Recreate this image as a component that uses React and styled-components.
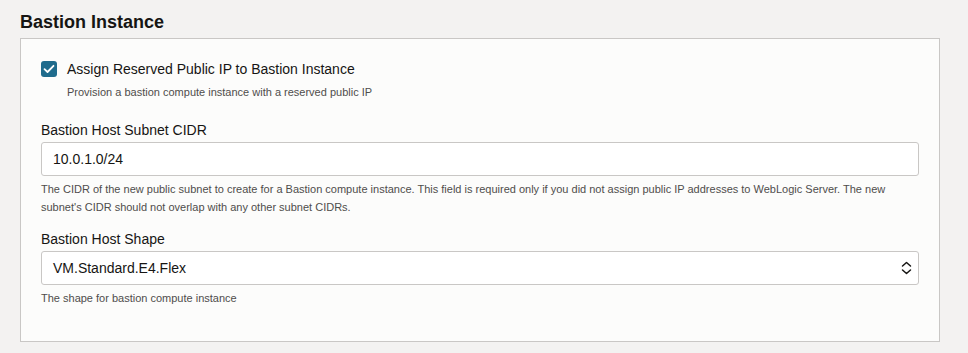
import styled, { createGlobalStyle } from "styled-components";

const GlobalStyle = createGlobalStyle`
	html, body {
		margin: 0;
		padding: 0;
		background: #f3f2f1;
		font-family: "Liberation Sans", Arial, sans-serif;
		color: #161513;
	}
`;

const Page = styled.div`
	padding: 12px 28px 12px 20px;
	width: 968px;
	height: 353px;
	box-sizing: border-box;
`;

const Heading = styled.h2`
	margin: 0 0 5px;
	font-size: 18px;
	font-weight: 700;
	line-height: 21px;
`;

const Panel = styled.div`
	background: #fcfcfb;
	border: 1px solid #c9c7c5;
	padding: 21px 20px 34px 20px;
	display: flex;
	flex-direction: column;
`;

const CheckRow = styled.label`
	display: flex;
	align-items: center;
	gap: 10px;
	font-size: 14px;
	line-height: 18px;
`;

const Box = styled.span`
	width: 16px;
	height: 16px;
	border-radius: 3px;
	background: #1f6b8c;
	display: flex;
	align-items: center;
	justify-content: center;
`;

const Help = styled.p`
	margin: ${(props) => props.$margin || "0"};
	font-size: 11px;
	line-height: 18px;
	color: #4f4d4b;
`;

const Field = styled.div`
	display: flex;
	flex-direction: column;
	margin-top: ${(props) => props.$top}px;
`;

const Label = styled.div`
	font-size: 14px;
	line-height: 18px;
	margin-bottom: 3px;
`;

const Input = styled.div`
	height: 34px;
	box-sizing: border-box;
	border: 1px solid #c9c7c5;
	border-radius: 3px;
	background: #fff;
	display: flex;
	align-items: center;
	justify-content: space-between;
	padding: 0 6px 0 11px;
	font-size: 14px;
`;

const Check = () => (
	<Box>
		<svg width="12" height="10" viewBox="0 0 12 10" fill="none">
			<path d="M1.5 5.2 L4.5 8 L10.5 1.8" stroke="#fff" strokeWidth="1.8" strokeLinecap="round" strokeLinejoin="round" />
		</svg>
	</Box>
);

const Chevrons = () => (
	<svg width="11" height="14" viewBox="0 0 11 14" fill="none">
		<path d="M1.5 5 L5.5 1.5 L9.5 5" stroke="#161513" strokeWidth="1.5" strokeLinecap="round" strokeLinejoin="round" />
		<path d="M1.5 9 L5.5 12.5 L9.5 9" stroke="#161513" strokeWidth="1.5" strokeLinecap="round" strokeLinejoin="round" />
	</svg>
);

const App = () => {
	return (
		<Page>
			<GlobalStyle />
			<Heading>Bastion Instance</Heading>
			<Panel>
				<CheckRow>
					<Check />
					Assign Reserved Public IP to Bastion Instance
				</CheckRow>
				<Help $margin="5px 0 0 26px">Provision a bastion compute instance with a reserved public IP</Help>

				<Field $top={20}>
					<Label>Bastion Host Subnet CIDR</Label>
					<Input>10.0.1.0/24</Input>
					<Help $margin="4px 0 0">
						The CIDR of the new public subnet to create for a Bastion compute instance. This field is required only if you did not assign public IP addresses to WebLogic Server. The new subnet's CIDR should not overlap with any other subnet CIDRs.
					</Help>
				</Field>

				<Field $top={14}>
					<Label>Bastion Host Shape</Label>
					<Input>
						VM.Standard.E4.Flex
						<Chevrons />
					</Input>
					<Help $margin="4px 0 0">The shape for bastion compute instance</Help>
				</Field>
			</Panel>
		</Page>
	);
};

export default App;
